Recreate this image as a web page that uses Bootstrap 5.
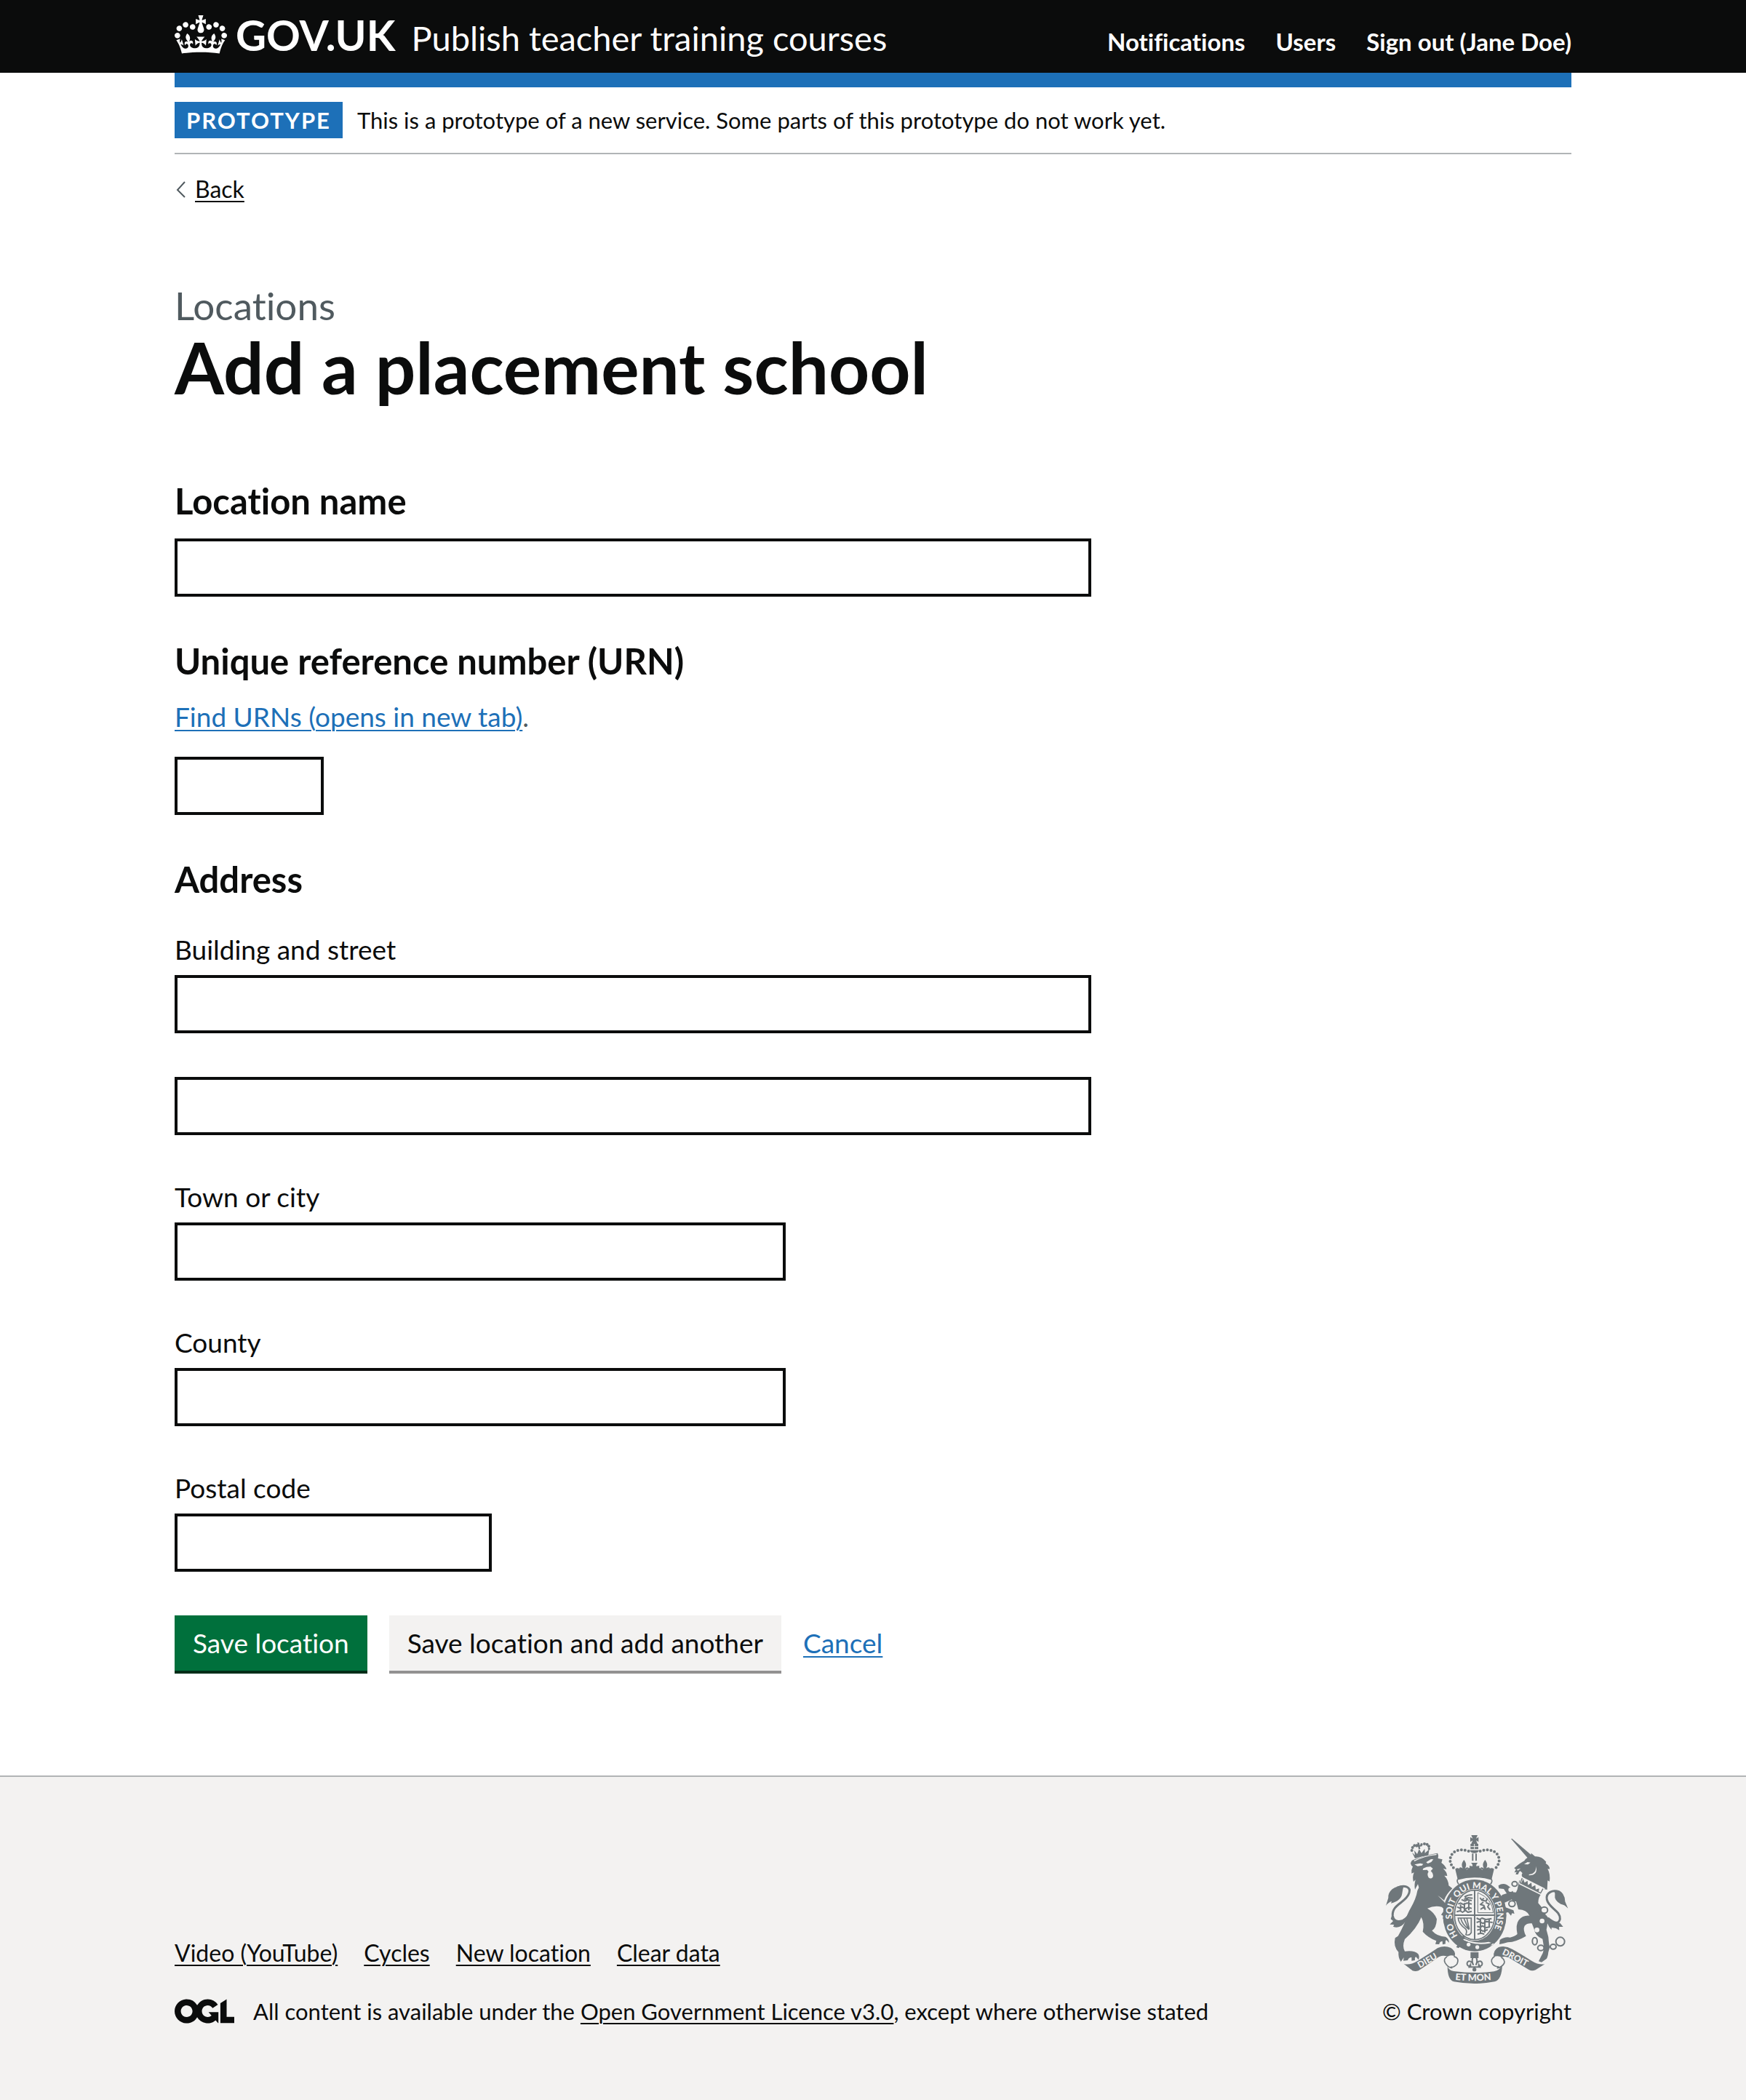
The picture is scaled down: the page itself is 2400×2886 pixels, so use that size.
<!DOCTYPE html>
<html lang="en">
<head>
<meta charset="utf-8">
<meta name="viewport" content="width=device-width, initial-scale=1">
<title>Add a placement school - Publish teacher training courses</title>
<link href="https://cdn.jsdelivr.net/npm/bootstrap@5.3.0/dist/css/bootstrap.min.css" rel="stylesheet">
<style>
:root {
  --ink: #0b0c0c;
  --brand-blue: #1d70b8;
  --rule: #b1b4b6;
  --soft: #f3f2f1;
}
body { font-family: Lato, "Liberation Sans", sans-serif; font-size: 37px; line-height: 50px; color: var(--ink); font-variant-ligatures: none; }
a { color: var(--brand-blue); text-decoration-thickness: 2px; text-underline-offset: 4px; }
a.ink-link { color: var(--ink); }
.page-width { max-width: 2040px; padding: 0 60px; margin: 0 auto; }
.text-16 { font-size: 31px; line-height: 40px; }

.site-header { background: var(--ink); color: #fff; }
.site-header a { color: #fff; text-decoration: none; }
.header-row { padding: 18px 0 13px; line-height: 60px; }
.logo-link { font-size: 58px; font-weight: 700; }
.logo-link svg { vertical-align: -4px; margin-right: 12px; }
.service-name { font-size: 47px; margin-left: 22px; }
.header-nav { font-size: 33px; font-weight: 700; gap: 42px; }

.phase-banner { border-top: 20px solid var(--brand-blue); border-bottom: 2px solid var(--rule); padding: 20px 0; gap: 20px; font-size: 31px; line-height: 50px; }
.phase-tag { background: var(--brand-blue); color: #fff; padding: 0 16px; font-weight: 700; letter-spacing: 2px; }

.back-link { margin-top: 28px; gap: 12px; font-size: 32px; }
.main-area { padding: 110px 0 140px; }
.form-row { --bs-gutter-x: 60px; }
.caption-xl { font-size: 53px; line-height: 60px; color: #505a5f; margin-bottom: 4px; }
.title-xl { font-size: 98px; line-height: 100px; font-weight: 700; margin-bottom: 106px; }
.label-m { display: block; font-size: 49px; line-height: 56px; font-weight: 700; margin: 0 0 24px; }
.label-s { display: block; margin-bottom: 10px; }
.hint-text { color: #505a5f; margin-bottom: 30px; }
.field { margin-bottom: 60px; }
.field .form-control { height: 80px; border: 4px solid var(--ink); border-radius: 0; color: var(--ink); font-size: 37px; padding: 10px; }
.field .w-urn { width: 205px; }
.field .w-postcode { width: 436px; }
.field .w-two-thirds { width: 66.6667%; }
.address-title { margin-bottom: 44px; }

.actions { gap: 30px; }
.actions .btn { border: 0; border-bottom: 4px solid; border-radius: 0; padding: 13px 25px; font-size: 37px; line-height: 50px; font-variant-ligatures: none; }
.actions .btn-save { background: #00703c; color: #fff; border-color: #002d18; }
.actions .btn-another { background: var(--soft); color: var(--ink); border-color: #929191; }

.site-footer { background: var(--soft); border-top: 2px solid var(--rule); padding: 80px 0 102px; }
.footer-links { font-size: 32px; gap: 36px; margin-bottom: 40px; }
.licence { gap: 26px; }
.crest { margin-bottom: 18px; overflow: visible; }
</style>
<script src="https://cdn.jsdelivr.net/npm/bootstrap@5.3.0/dist/js/bootstrap.bundle.min.js"></script>
</head>
<body>

<header class="site-header">
  <div class="page-width">
    <div class="header-row d-flex flex-wrap justify-content-between align-items-baseline">
      <div class="d-flex flex-wrap align-items-baseline">
        <a class="logo-link" href="#"><svg width="72" height="53" viewBox="0 0 132 97" fill="currentColor" aria-hidden="true"><path fill-rule="evenodd" d="M25 30.2c3.5 1.5 7.7-.2 9.1-3.7 1.5-3.6-.2-7.8-3.9-9.2-3.6-1.4-7.6.3-9.1 3.9-1.4 3.5.3 7.5 3.9 9zM9 39.5c3.6 1.5 7.8-.2 9.2-3.7 1.5-3.6-.2-7.8-3.9-9.1-3.6-1.5-7.6.2-9.1 3.8-1.4 3.5.3 7.5 3.8 9zM4.4 57.2c3.5 1.5 7.7-.2 9.1-3.8 1.5-3.6-.2-7.7-3.9-9.1-3.5-1.5-7.6.3-9.1 3.8-1.4 3.5.3 7.6 3.9 9.1zm38.3-21.4c3.5 1.5 7.7-.2 9.1-3.8 1.5-3.6-.2-7.7-3.9-9.1-3.6-1.5-7.6.3-9.1 3.8-1.3 3.6.4 7.7 3.9 9.1zm64.4-5.6c-3.6 1.5-7.8-.2-9.1-3.7-1.5-3.6.2-7.8 3.8-9.2 3.6-1.4 7.7.3 9.2 3.9 1.3 3.5-.4 7.5-3.9 9zm15.9 9.3c-3.6 1.5-7.7-.2-9.1-3.7-1.5-3.6.2-7.8 3.7-9.1 3.6-1.5 7.7.2 9.2 3.8 1.5 3.5-.3 7.5-3.8 9zm4.7 17.7c-3.6 1.5-7.8-.2-9.2-3.8-1.5-3.6.2-7.7 3.9-9.1 3.6-1.5 7.7.3 9.2 3.8 1.3 3.5-.4 7.6-3.9 9.1zM89.3 35.8c-3.6 1.5-7.8-.2-9.2-3.8-1.4-3.6.2-7.7 3.9-9.1 3.6-1.5 7.7.3 9.2 3.8 1.4 3.6-.3 7.7-3.9 9.1zM69.7 17.7l8.9 4.7V9.3l-8.9 2.8c-.2-.3-.5-.6-.9-.9L72.4 0H59.6l3.5 11.2c-.3.3-.6.5-.9.9l-8.8-2.8v13.1l8.8-4.7c.3.3.6.7.9.9l-5 15.4v.1c-.2.8-.4 1.6-.4 2.4 0 4.1 3.1 7.5 7 8.1h.2c.3 0 .7.1 1 .1.4 0 .7 0 1-.1h.2c4-.6 7.1-4.1 7.1-8.1 0-.8-.1-1.7-.4-2.4V34l-5.1-15.4c.4-.2.7-.6 1-.9zM66 92.8c16.9 0 32.8 1.1 47.1 3.2 4-16.9 8.9-26.7 14-33.5l-9.6-3.4c1 4.9 1.1 7.2 0 10.2-1.5-1.4-3-4.3-4.2-8.7L108.6 76c2.8-2 5-3.2 7.5-3.3-4.4 9.4-10 11.9-13.6 11.2-4.3-.8-6.3-4.6-5.6-7.9 1-4.7 5.7-5.9 8-.5 4.3-8.7-3-11.4-7.6-8.8 7.1-7.2 7.9-13.5 2.1-21.1-8 6.1-8.1 12.3-4.5 20.8-4.7-5.4-12.1-2.5-9.5 6.2 3.4-5.2 7.9-2 7.2 3.1-.6 4.3-6.4 7.8-13.5 7.2-10.3-.9-10.9-8-11.2-13.8 2.5-.5 7.1 1.8 11 7.3L80.2 60c-4.1 4.4-8 5.3-12.3 5.4 1.4-4.4 8-11.6 8-11.6H55.5s6.4 7.2 7.9 11.6c-4.2-.1-8-1-12.3-5.4l1.4 16.4c3.9-5.5 8.5-7.7 10.9-7.3-.3 5.8-.9 12.8-11.1 13.8-7.2.6-12.9-2.9-13.5-7.2-.7-5 3.8-8.3 7.1-3.1 2.7-8.7-4.6-11.6-9.4-6.2 3.7-8.5 3.6-14.7-4.6-20.8-5.8 7.6-5 13.9 2.2 21.1-4.7-2.6-11.9.1-7.7 8.8 2.3-5.5 7.1-4.2 8.1.5.7 3.3-1.3 7.1-5.7 7.9-3.5.7-9-1.8-13.5-11.2 2.5.1 4.7 1.3 7.5 3.3l-4.7-15.4c-1.2 4.4-2.7 7.2-4.3 8.7-1.1-3-.9-5.3 0-10.2l-9.5 3.4c5 6.9 9.9 16.7 14 33.5 14.8-2.1 30.8-3.2 47.7-3.2z"/></svg>GOV.UK</a>
        <a class="service-name" href="#">Publish teacher training courses</a>
      </div>
      <nav class="header-nav d-flex flex-wrap" aria-label="Account">
        <a href="#">Notifications</a>
        <a href="#">Users</a>
        <a href="#">Sign out (Jane Doe)</a>
      </nav>
    </div>
  </div>
</header>

<div class="page-width">
  <div class="phase-banner d-flex">
    <strong class="phase-tag">PROTOTYPE</strong>
    <span>This is a prototype of a new service. Some parts of this prototype do not work yet.</span>
  </div>

  <div class="back-link text-16 d-flex align-items-center">
    <svg width="16" height="24" viewBox="0 0 16 24" fill="none" stroke="#505a5f" stroke-width="2" aria-hidden="true"><path d="M14 2 4 13l10 10"/></svg>
    <a class="ink-link" href="#">Back</a>
  </div>

  <main class="main-area">
    <div class="row form-row">
      <form class="col-12 col-lg-8">
        <p class="caption-xl">Locations</p>
        <h1 class="title-xl">Add a placement school</h1>

        <div class="field">
          <label class="label-m" for="name">Location name</label>
          <input class="form-control" id="name" type="text">
        </div>

        <div class="field">
          <label class="label-m" for="urn">Unique reference number (URN)</label>
          <div class="hint-text" id="urn-hint"><a href="#">Find URNs (opens in new tab)</a>.</div>
          <input class="form-control w-urn" id="urn" type="text" aria-describedby="urn-hint">
        </div>

        <h2 class="label-m address-title">Address</h2>
        <div class="field">
          <label class="label-s" for="line1">Building and street</label>
          <input class="form-control" id="line1" type="text">
        </div>
        <div class="field">
          <input class="form-control" id="line2" type="text" aria-label="Building and street line 2">
        </div>
        <div class="field">
          <label class="label-s" for="town">Town or city</label>
          <input class="form-control w-two-thirds" id="town" type="text">
        </div>
        <div class="field">
          <label class="label-s" for="county">County</label>
          <input class="form-control w-two-thirds" id="county" type="text">
        </div>
        <div class="field">
          <label class="label-s" for="postcode">Postal code</label>
          <input class="form-control w-postcode" id="postcode" type="text">
        </div>

        <div class="actions d-flex flex-wrap align-items-baseline">
          <button class="btn btn-save" type="button">Save location</button>
          <button class="btn btn-another" type="button">Save location and add another</button>
          <a href="#">Cancel</a>
        </div>
      </form>
    </div>
  </main>
</div>

<footer class="site-footer">
  <div class="page-width d-flex flex-wrap justify-content-between align-items-end text-16">
    <div>
      <nav class="footer-links d-flex flex-wrap" aria-label="Footer">
        <a class="ink-link" href="#">Video (YouTube)</a>
        <a class="ink-link" href="#">Cycles</a>
        <a class="ink-link" href="#">New location</a>
        <a class="ink-link" href="#">Clear data</a>
      </nav>
      <div class="licence d-flex align-items-center">
        <svg class="flex-shrink-0" width="82" height="34" viewBox="0 0 483.2 195.7" fill="currentColor" aria-hidden="true"><path d="M421.5 142.8V.1l-50.7 32.3v161.1h112.4v-50.7zm-122.3-9.6A47.12 47.12 0 0 1 221 97.8c0-26 21.1-47.1 47.1-47.1 16.7 0 31.4 8.7 39.7 21.8l42.7-27.2A97.63 97.63 0 0 0 268.1 0c-36.5 0-68.3 20.1-85.1 49.7A98 98 0 0 0 97.8 0C43.9 0 0 43.9 0 97.8s43.9 97.8 97.8 97.8c36.5 0 68.3-20.1 85.1-49.7a97.76 97.76 0 0 0 149.6 25.4l19.4 22.2h3v-87.8h-80l24.3 27.5zM97.8 145c-26 0-47.1-21.1-47.1-47.1s21.1-47.1 47.1-47.1 47.1 21.1 47.1 47.1S123.800 145 97.800 145"/></svg>
        <span>All content is available under the <a class="ink-link" href="#">Open Government Licence v3.0</a>, except where otherwise stated</span>
      </div>
    </div>
    <div class="text-center">
      <svg class="crest d-block mx-auto" width="250" height="204" viewBox="72 66 750 612" fill="#6f777b" aria-hidden="true">
        <defs>
          <path id="garterArc" d="M382 496A96 114 0 0 1 345 402A93 112 0 1 1 480 498"/>
          <path id="dieuArc" d="M212 615Q262 586 318 554"/>
          <path id="monArc" d="M340 661Q437 673 540 659"/>
          <path id="droitArc" d="M550 557Q600 580 668 618"/>
          <g id="lis"><path d="M0-24C-13-8-9 2-4 13-10 4-22 4-20 17c5-6 10-4 11 3H9c1-7 6-9 11-3C22 4 10 4 4 13 9 2 13-8 0-24z"/></g>
        </defs>

        <!-- lion: crown -->
        <g>
          <circle cx="179" cy="129" r="6"/><circle cx="182" cy="117" r="6"/><circle cx="190" cy="109" r="6"/><circle cx="200" cy="107" r="5"/>
          <circle cx="219" cy="104" r="5"/><circle cx="231" cy="102" r="6"/><circle cx="242" cy="104" r="6"/><circle cx="249" cy="112" r="6"/><circle cx="250" cy="122" r="5"/>
          <path d="M202 95l8 3 1 9 11-3-1 8-9 1 2 10-7 1-2-10-9 2-2-7 9-2z"/>
          <path d="M180 137l12 12-3-20 12 15 8-20 10 16 13-18 1 18 18-16-4 25q-28 4-55 13z"/>
        </g>
        <!-- lion: head, mane and body -->
        <path d="M174 183Q176 170 186 167L250 147 285 140Q291 150 287 162L305 166 301 180Q318 192 322 207L308 204Q324 218 325 234L313 233Q330 250 331 274L346 286Q320 310 312 335L345 370Q352 390 348 412L336 404Q338 420 332 424 324 420 322 410 312 418 306 408L316 400 300 395Q306 382 314 382 310 366 302 362 272 355 243 368 274 386 282 412 280 450 262 460 284 485 318 485 332 492 333 510L321 498Q316 502 318 514L306 517 305 503Q293 504 292 516L276 515 280 502Q245 488 224 464 232 430 218 404 200 450 150 495 138 525 150 545 190 540 205 556 212 566 207 580L196 568Q190 570 192 582L178 584 178 570Q166 570 162 582L144 584 146 570 134 588Q122 570 124 548 102 526 110 490L122 482Q140 450 150 425 160 390 175 365 196 330 202 295L208 282 204 268 192 290Q188 272 194 250L186 258Q180 240 188 220L178 224Q176 208 183 195 176 192 174 183z"/>
        <g fill="#f3f2f1">
          <path d="M187 170q50-22 95-27l-2 5q-46 4-90 26z"/>
          <path d="M190 187l24-5 12 3-5 6-18 3zM238 178l20-13 10 1-9 11-14 6z"/>
          <path d="M226 203l14-6 16-1 10 8-9 10q14 12 8 26-8 9-17 1-8-14 0-24l-6-8-18 1z"/>
          <path d="M286 315q30 20 48 44l-4 4q-18-24-44-48z"/>
        </g>
        <!-- lion: tail -->
        <path fill="none" stroke="#6f777b" stroke-width="9" d="M118 283C150 270 176 280 168 304 156 345 96 350 100 398q6 32 42 20 20-10 30-32"/>
        <path d="M146 274q-30 2-48 15-18 16-16 36l-10 32q10-14 24-18l-3 8q42-10 46-40 2-16 7-33zM98 392l-6 20 10 8-14 14 18 1-4 8q18 8 36-4 16-14 28-40l-24 18q-26 8-40-4z"/>

        <!-- unicorn: horn -->
        <path d="M588 81l4-1 82 70-14 14z"/>
        <!-- unicorn: head and mane -->
        <path d="M601 202q28-24 42-30 8-14 26-18l2-14 16 14q26-2 46 22l-2 6q18 12 16 24l-8-1q12 22 8 52l-8-4-2 38-12-2-84-42q-14-14-6-24-4-6-10-9-6 6-8 14l-10 0 4-10-9 2 6-12z"/>
        <!-- unicorn: body -->
        <path d="M622 252L716 306q-16 14-16 40 28 30 34 60 8 20 0 50l8 30q2 30 6 42l-6 20q-2 20-8 28l-20 14-12-4 14-28q8-12 6-40l-4-24q-30-10-36-44l-8-20q-20-2-30 10-8 16 6 42-40 24-76 26l-16 4-18 4 2-18q20-14 42-10 20-4 30-14-8-40 6-58 16-20 44-18-10-24-46-26-8-32-12-40-4-20 8-42z"/>
        <!-- unicorn: forelegs -->
        <path d="M536 274q24-18 50 8l16 26 12 30-16 2-28-34-12-18-20-2z"/>
        <path d="M610 318l-24 16-24 10 4 20 32 12 4 14-10-2-4 10-12-14-10 2-6-10-2-28-16-22 10-14q34-12 58-10z"/>
        <g fill="#f3f2f1">
          <path d="M642 186l14-9 12 2-10 8zM662 228q32-4 28-34 12 36-28 38zM612 207l16-4-12 9z"/>
          <circle cx="716" cy="420" r="10"/><circle cx="695" cy="457" r="10"/><circle cx="586" cy="291" r="9"/>
        </g>
        <!-- unicorn: coronet collar -->
        <path fill="#f3f2f1" d="M630 236l98 50-14 28-94-46z"/>
        <path fill="none" stroke="#6f777b" stroke-width="4" d="M634 243l-8 20 84 42 10-18"/>
        <path d="M630 264l8-18 6 16 12-8 2 18 14-10 2 18 14-8 2 18 14-4-2 14z"/>
        <!-- unicorn: tail -->
        <path fill="none" stroke="#6f777b" stroke-width="9" d="M788 302C760 288 730 304 736 332 744 368 792 376 790 412q-8 32-50-4"/>
        <path d="M762 294q26-6 40 14 10 16 9 32l12 28q-14-16-30-18-28-16-24-36 2-12-7-20zM730 392q20 32 60 36l13 16-17 0 1 14q-16-12-32-10l0 8q-22-22-25-64z"/>
        <!-- unicorn: chain -->
        <g fill="#f3f2f1" stroke="#6f777b" stroke-width="6">
          <ellipse cx="603" cy="267" rx="11" ry="10"/><ellipse cx="592" cy="349" rx="13" ry="12"/><ellipse cx="725" cy="375" rx="14" ry="13"/>
          <ellipse cx="686" cy="503" rx="10" ry="15"/><ellipse cx="711" cy="531" rx="13" ry="11"/><ellipse cx="762" cy="526" rx="12" ry="10"/><circle cx="791" cy="505" r="18"/>
        </g>

        <!-- royal crown -->
        <path d="M424 66h26l-6 14 10-6v20l-10-6 6 14h-26l6-14-10 6V74l10 6zM421 102h32v22h-32zM418 128h38q-4 12-19 12t-19-12z"/>
        <path fill="none" stroke="#f3f2f1" stroke-width="3" d="M437 102v22M421 113h32"/>
        <path d="M427 142h6v30h-6zM441 142h6v30h-6z"/>
        <g fill="none" stroke="#6f777b" stroke-width="12" stroke-linecap="round" stroke-dasharray="0 15">
          <path d="M413 132C372 118 336 134 337 172q3 22 22 36"/>
          <path d="M461 132C502 118 540 134 539 172q-3 22-22 36"/>
        </g>
        <path d="M358 206q8-8 18 0 14-8 22 4 14-2 20-12l-2-6 13 2q2-8-6-14h28q-8 6-6 14l13-2-2 6q6 10 20 12 8-12 22-4 10-8 20 0l-10 42q-71-22-140 0z"/>
        <use href="#lis" transform="translate(394 192)"/><use href="#lis" transform="translate(481 192)"/>
        <path fill="none" stroke="#6f777b" stroke-width="5" d="M368 248q69-20 139 0 6 10-4 20M368 248q-5 10 4 20"/>

        <!-- garter -->
        <ellipse cx="438" cy="397" rx="131" ry="148"/>
        <ellipse cx="438" cy="395" rx="88" ry="107" fill="#f3f2f1"/>
        <text fill="#f3f2f1" font-family="Lato, sans-serif" font-weight="900" font-size="36"><textPath href="#garterArc" startOffset="20">HO&#160;&#160;SOIT QUI MAL Y PENSE</textPath></text>
        <path fill="#f3f2f1" d="M372 482q60 36 124 24l22 8-8 6q-70 10-134-30z"/>
        <path d="M364 502q8-10 2-18l8-6 8 8 12-8 4 12-8 8q50 24 108 14l20-4q-34 36-80 36-34-2-60-20l-6 8-10-4 6-10z"/>
        <circle cx="413" cy="517" r="8" fill="#f3f2f1"/><circle cx="449" cy="528" r="8" fill="#f3f2f1"/>

        <!-- quartered shield -->
        <g fill="none" stroke="#6f777b" stroke-width="5">
          <ellipse cx="438" cy="395" rx="83" ry="102"/>
          <path stroke-width="6" d="M438 292v204M354 396h168"/>
          <path stroke-width="3" d="M451 303v83h64q-4-58-64-83z"/>
          <path d="M370 408h54v60q-8 14-22 8 6-16-2-24-28-20-30-44zM381 410q6 24 30 42M394 410l20 46M406 410l10 44"/>
        </g>
        <g fill="none" stroke="#6f777b" stroke-width="6" stroke-linejoin="round">
          <path d="M428 312q-18 0-30 8l8 8-12 2M430 326l-20-2-6 12M384 332l14 6 10-6 18 4M370 350l10-4 12 6 14-6 20 4M366 362l12 6 8-6 14 8 12-6 14 4M364 382l14-4 10 6 12-8 10 8 16-4M396 346v30M414 332v44M380 352v26"/>
          <path d="M446 408l12 6 10-6 16 6 24-4M446 426l12-4 14 8 14-8 26 4M448 442l14 4 8-6 14 8 18-4M448 458l12-4 12 8 20-6M450 474l14-4 14 4M462 410v62M480 412v56M498 412v34"/>
          <path d="M460 324l8 10 8-8M466 334l20 4 4-12M474 342l-12 10 14 4 6 18M484 344l14 6-6 12 10 12M462 372l12-8 8 4"/>
        </g>

        <!-- lis pendant -->
        <path d="M421 549h33v24h-33z"/>
        <path fill="none" stroke="#6f777b" stroke-width="6" d="M437 562c-14 14-10 28-4 40-8-22-28-20-26-4 2 10 12 8 14 2 2 6-4 12-8 10h50c-4 2-10-4-8-10 2 6 12 8 14-2 2-16-18-18-26 4 6-12 10-26-6-40zM437 608v18"/>
        <circle cx="437" cy="620" r="8"/>

        <!-- motto scroll -->
        <path d="M146 597q26 6 56-12 58-36 84-54 28-12 54 0 22 14 16 34-18-8-30 2-24-10-46 8-44 30-74 50-12 4-24 0z"/>
        <path d="M727 598q-26 4-54-14-54-34-80-48-28-16-56-8-24 12-20 40 18-8 32 2 20-8 42 8 44 26 72 44 12 6 26 0z"/>
        <path d="M326 606q6 18 26 21 85 12 166 1 26-6 34-28-2 64-32 70-83 16-168 0-26-8-26-64z"/>
        <g fill="none" stroke="#6f777b" stroke-width="5">
          <path d="M352 566q24 6 14 30-12 16-28 14M324 568q-16 8-8 24 12 20 30 22"/>
          <path d="M520 566q-20 12-8 32 10 12 26 10M548 570q16 10 12 24-10 18-30 20"/>
        </g>
        <g fill="#f3f2f1" font-family="Lato, sans-serif" font-weight="900">
          <text font-size="36"><textPath href="#dieuArc">DIEU</textPath></text>
          <text font-size="38"><textPath href="#monArc" startOffset="18">ET MON</textPath></text>
          <text font-size="36"><textPath href="#droitArc">DROIT</textPath></text>
        </g>
      </svg>
      <a class="ink-link text-decoration-none" href="#">© Crown copyright</a>
    </div>
  </div>
</footer>

</body>
</html>
